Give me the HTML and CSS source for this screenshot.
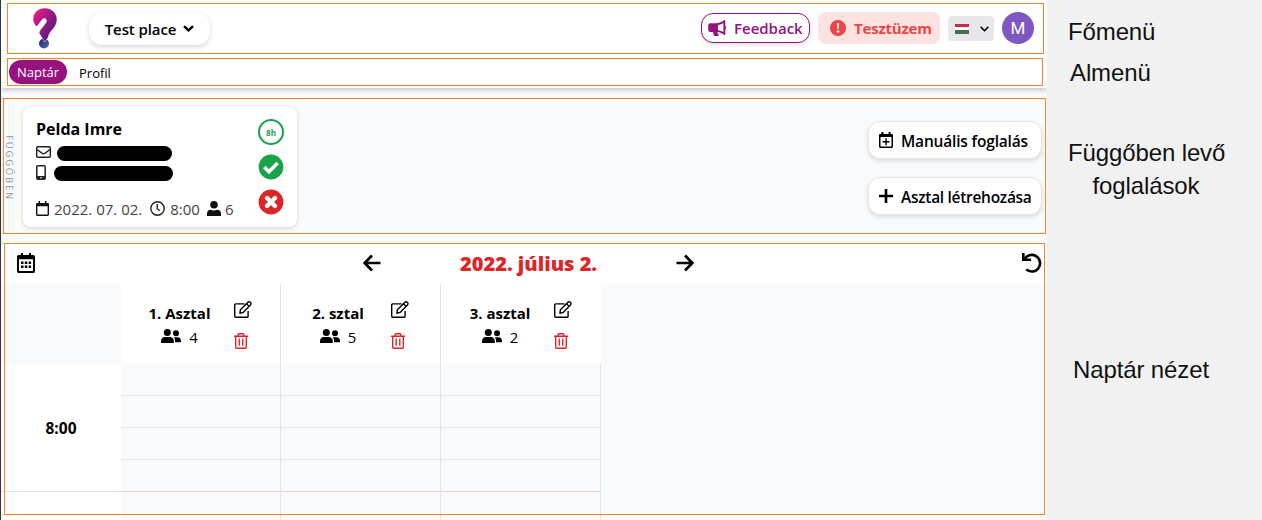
FILE: index.html
```html
<!DOCTYPE html>
<html lang="hu">
<head>
<meta charset="utf-8">
<title>Naptár</title>
<link rel="stylesheet" href="styles.css">
</head>
<body>
<svg class="defs" width="0" height="0">
  <symbol id="people" viewBox="0 0 20 14"><circle cx="6.3" cy="3.6" r="3.5"/><path d="M0 13.9v-2.1C0 9.500 1.900 7.900 4 7.900h4.800c2.100 0 4 1.600 4 3.900v2.100z"/><circle cx="15" cy="4.200" r="3"/><path d="M13.400 8.200h3.300c1.900 0 3.300 1.600 3.300 3.500v1.500h-6v-1.800c0-1.300-.5-2.300-1.300-3z"/></symbol>
  <symbol id="edit" viewBox="0 0 18 17"><g fill="none" stroke="currentColor" stroke-width="1.400" stroke-linejoin="round"><path d="M10.500 2.900H1.700a1 1 0 0 0-1 1v11.400a1 1 0 0 0 1 1h11.400a1 1 0 0 0 1-1V10"/><path d="M5.900 12.200l.5-3.400 7.500-7.500c.7-.7 1.600-.7 2.300 0l.3.300c.7.700.7 1.600 0 2.300L9.100 11.400z"/><path d="M12.500 2.800l2.500 2.500"/></g></symbol>
  <symbol id="trash" viewBox="0 0 14 16"><g fill="none" stroke="currentColor" stroke-width="1.400"><path d="M0 3.200h14M4.200 3V1.600c0-.5.300-.9.800-.9h4c.5 0 .8.400.8.900V3M1.700 3.200v11c0 .6.400 1.100 1 1.100h8.600c.6 0 1-.5 1-1.100v-11M5.200 5.500v7.300M8.800 5.500v7.300"/></g></symbol>
</svg>
<div class="page">
  <div class="app">
    <div class="topbar">
      <header class="main-menu">
        <svg class="logo" width="24" height="41" viewBox="0 0 24 41">
          <defs>
            <linearGradient id="lg" x1="0" y1="0" x2="1" y2="1"><stop offset="0" stop-color="#f2168b"/><stop offset=".18" stop-color="#d91886"/><stop offset=".58" stop-color="#801b7f"/><stop offset="1" stop-color="#281c76"/></linearGradient>
            <linearGradient id="ld" x1="0" y1="0" x2="1" y2="1"><stop offset="0" stop-color="#241c6c"/><stop offset="1" stop-color="#4f72ac"/></linearGradient>
          </defs>
          <circle cx="11" cy="35.500" r="5" fill="url(#ld)"/>
          <path fill="url(#lg)" stroke="#fff" stroke-width=".5" d="M11.800 0C18.800 0 24 5 24 11.300c0 4-1.800 7.300-4.500 10.300-2.500 2.900-4 5.200-4.500 8.200L11.600 34 6.500 25.800c-.7-1.400-.2-2.500.9-3.900l5.100-6.700c1.100-1.500 1.300-2.600.6-3.700-.9-1.400-3-1.200-4.200.4l-4.200 5.700c-.7 1-1.600 1-2.200 0C.900 15.500 0 13.700 0 11.300 0 4.900 4.900 0 11.800 0z"/>
        </svg>
        <button class="place">Test place <svg width="11" height="7" viewBox="0 0 11 7"><path d="M1 1.200l4.500 4.200L10 1.200" fill="none" stroke="#000" stroke-width="2.400"/></svg></button>
        <button class="feedback"><svg width="19" height="16" viewBox="0 0 19 16"><path d="M2.200 3.200H8C11 3.200 13.800 2 15.900.3c.6-.5 1.400-.2 1.400.6V6c1 .3 1 2.800 0 3.200v5c0 .8-.8 1.100-1.400.6-1.800-1.500-4-2.500-6.500-2.800.1 1.100.5 1.800 1.200 2.400.5.400.2 1.500-.5 1.500H7c-.6 0-1-.2-1.200-.7-.5-1.100-.7-2.100-.6-3.300h-3C1 11.900.2 11.100.2 9.900V5.200c0-1.200.8-2 2-2z"/><path fill="#fff" d="M10 4.900c2-.3 3.900-1 5.400-2v9.200c-1.500-1-3.400-1.600-5.400-1.900z"/></svg><span>Feedback</span></button>
        <div class="test-mode"><svg width="16" height="16" viewBox="0 0 16 16"><circle cx="8" cy="8" r="8" fill="#ef4444"/><path d="M6.800 3h2.400l-.3 6H7.100z" fill="#fde2e2"/><circle cx="8" cy="11.600" r="1.400" fill="#fde2e2"/></svg><span>Tesztüzem</span></div>
        <div class="language"><i class="flag"></i><svg width="9" height="6" viewBox="0 0 9 6"><path d="M.7.900l3.800 3.800L8.300.900" fill="none" stroke="#000" stroke-width="1.600"/></svg></div>
        <div class="avatar">M</div>
      </header>
      <nav class="sub-menu"><a class="active">Naptár</a><a>Profil</a></nav>
    </div>

    <section class="pending">
      <div class="side-label">FÜGGŐBEN</div>
      <article class="booking">
        <div class="booking-info">
          <h2>Pelda Imre</h2>
          <div class="contact"><svg width="15" height="12" viewBox="0 0 15 12"><g fill="none" stroke="#222" stroke-width="1.400"><rect x=".7" y=".7" width="13.600" height="10.600" rx="1"/><path d="M1 3.500l5.300 3.900c.8.500 1.600.5 2.400 0L14 3.500"/></g></svg><span class="redacted mail"></span></div>
          <div class="contact phone-row"><svg width="10" height="15" viewBox="0 0 10 15"><rect x=".8" y=".8" width="8.400" height="13.400" rx="1" fill="none" stroke="#222" stroke-width="1.500"/><path d="M1 11h8v3H1z" fill="#222"/><circle cx="5" cy="12.700" r=".8" fill="#fff"/></svg><span class="redacted phone"></span></div>
          <div class="meta">
            <svg width="13" height="15" viewBox="0 0 13 15"><path d="M2.500 0h1.600v2h4.800V0h1.600v2h1.200c.8 0 1.300.5 1.300 1.300v10.300c0 .8-.5 1.400-1.300 1.400H1.300C.5 15 0 14.400 0 13.600V3.300C0 2.500.5 2 1.300 2h1.200zM1.400 5.200v8.400h10.200V5.200z"/></svg>
            <span class="date">2022. 07. 02.</span>
            <svg class="clock" width="15" height="15" viewBox="0 0 15 15"><g fill="none" stroke="#222" stroke-width="1.400"><circle cx="7.500" cy="7.500" r="6.700"/><path d="M7.200 3v4.700l2.600 2"/></g></svg>
            <span class="time">8:00</span>
            <svg class="person" width="14" height="15" viewBox="0 0 14 15"><circle cx="7" cy="3.800" r="3.800"/><path d="M0 15v-2.400c0-2.200 1.600-3.800 3.800-3.800.8.300 2 .6 3.200.6s2.400-.3 3.200-.6c2.200 0 3.800 1.600 3.800 3.800V15z"/></svg>
            <span>6</span>
          </div>
        </div>
        <div class="actions">
          <span class="hours">8h</span>
          <svg width="26" height="26" viewBox="0 0 26 26"><circle cx="13" cy="13" r="12.400" fill="#19a44b"/><path d="M6.300 13l4.700 4.700 8.600-8.600" fill="none" stroke="#fff" stroke-width="3.500"/></svg>
          <svg width="26" height="26" viewBox="0 0 26 26"><circle cx="13" cy="13" r="12.400" fill="#dc2626"/><path d="M9 9l8 8M17 9l-8 8" fill="none" stroke="#fff" stroke-width="4.400" stroke-linecap="round"/></svg>
        </div>
      </article>
      <div class="buttons">
        <button><svg width="14" height="16" viewBox="0 0 14 16"><path d="M2.400 0h2v2h5.200V0h2v2h1c.9 0 1.400.5 1.400 1.400v11.200c0 .9-.5 1.400-1.400 1.400H1.400C.5 16 0 15.500 0 14.600V3.400C0 2.500.5 2 1.400 2h1zM1.500 5v9.500h11V5zM6.300 6.300h1.400v2.800h2.800v1.400H7.700v2.800H6.300v-2.800H3.500V9.100h2.800z"/></svg><span class="manual">Manuális foglalás</span></button>
        <button><svg width="14" height="14" viewBox="0 0 14 14"><path d="M5.700 0h2.600v5.700H14v2.600H8.300V14H5.700V8.300H0V5.700h5.700z"/></svg><span class="create">Asztal létrehozása</span></button>
      </div>
    </section>

    <section class="calendar">
      <div class="toolbar">
        <svg class="cal-icon" width="18" height="20" viewBox="0 0 18 20"><path d="M4 0h2v2h6V0h2v2h2.200c1.100 0 1.800.7 1.800 1.800v14.400c0 1.100-.7 1.800-1.800 1.800H1.800C.7 20 0 19.300 0 18.200V3.800C0 2.700.7 2 1.800 2H4zM2 6.300V18h14V6.300z"/><path d="M4 8.500h2.500v2.500H4zM7.800 8.500h2.500v2.500H7.800zM11.600 8.500h2.500v2.500h-2.500zM4 12.500h2.500V15H4zM7.800 12.500h2.500V15H7.800zM11.600 12.500h2.500V15h-2.500z"/></svg>
        <svg class="prev" width="18" height="18" viewBox="0 0 18 18"><path d="M17.500 9H2M9 1.500L1.700 9 9 16.500" fill="none" stroke="#000" stroke-width="2.700"/></svg>
        <h1>2022. július 2.</h1>
        <svg class="next" width="18" height="18" viewBox="0 0 18 18"><path d="M.5 9H16M9 1.500L16.300 9 9 16.500" fill="none" stroke="#000" stroke-width="2.700"/></svg>
        <svg class="undo" width="20" height="20" viewBox="0 0 20 20"><path d="M2.300 6.600A8.300 8.300 0 1 1 4.200 16.400" fill="none" stroke="#000" stroke-width="2.600"/><path d="M0 0h2.600v4.200L4 5.500h5V8H0z"/></svg>
      </div>
      <div class="grid">
        <div class="corner"></div>
        <div class="table-head"><div class="table-info"><strong>1. Asztal</strong><span><svg width="20" height="14"><use href="#people"/></svg>4</span></div><div class="tools"><svg width="18" height="17"><use href="#edit"/></svg><svg class="trash" width="14" height="16"><use href="#trash"/></svg></div></div>
        <div class="table-head"><div class="table-info short"><strong>2. sztal</strong><span><svg width="20" height="14"><use href="#people"/></svg>5</span></div><div class="tools"><svg width="18" height="17"><use href="#edit"/></svg><svg class="trash" width="14" height="16"><use href="#trash"/></svg></div></div>
        <div class="table-head"><div class="table-info"><strong>3. asztal</strong><span><svg width="20" height="14"><use href="#people"/></svg>2</span></div><div class="tools"><svg width="18" height="17"><use href="#edit"/></svg><svg class="trash" width="14" height="16"><use href="#trash"/></svg></div></div>
        <div class="hour">8:00</div>
        <div class="slots"><i></i><i></i><i></i><i></i></div>
        <div class="slots"><i></i><i></i><i></i><i></i></div>
        <div class="slots"><i></i><i></i><i></i><i></i></div>
        <div class="hour"></div>
        <div class="slots"></div>
        <div class="slots"></div>
        <div class="slots"></div>
      </div>
      <div class="frame"></div>
    </section>
  </div>
  <aside class="notes">
    <p class="n-main">Főmenü</p>
    <p class="n-sub">Almenü</p>
    <p class="n-pending">Függőben levő<br>foglalások</p>
    <p class="n-calendar">Naptár nézet</p>
  </aside>
</div>
</body>
</html>
```

FILE: styles.css
```css
* { box-sizing: border-box; }
body { margin: 0; font-family: "Open Sans", "Noto Sans", sans-serif; font-size: 15px; color: #000; overflow: hidden; }
svg { display: block; flex: none; }
.defs { position: absolute; }
h1, h2, p { margin: 0; }
button { font: inherit; color: inherit; padding: 0; }
.page { display: flex; width: 1262px; height: 520px; background: #f1f1f1; }
.app { display: flex; flex-direction: column; width: 1047px; height: 520px; border-left: 1px solid #36333b; background: #f9fafc; overflow: hidden; }

.topbar { flex: none; height: 88px; padding: 3px 3px 0 6px; background: #fff; box-shadow: 0 2px 5px rgba(0, 0, 0, .22); }
.main-menu { display: flex; align-items: center; height: 51px; border: 1px solid #ff8127; padding: 0 9px 1px 25px; }
.logo { margin-right: 32px; }
.place { display: flex; align-items: center; justify-content: center; gap: 7px; width: 121px; height: 32px; margin: 1px auto 0 0; border: 0; border-radius: 13px; background: #fff; box-shadow: 0 2px 5px rgba(0, 0, 0, .16); font-weight: 600; letter-spacing: -.1px; white-space: nowrap; }
.feedback { display: flex; align-items: center; gap: 7px; width: 109px; height: 30px; padding-left: 6px; border: 1px solid #96127f; border-radius: 12px; background: #fff; color: #96127f; fill: #96127f; font-weight: 600; box-shadow: 0 2px 4px rgba(0, 0, 0, .12); }
.test-mode { display: flex; align-items: center; gap: 8px; width: 122px; height: 32px; margin-left: 8px; padding-left: 12px; border-radius: 8px; background: #fde2e2; color: #ef4444; font-weight: 700; letter-spacing: -.2px; }
.language { display: flex; align-items: center; gap: 11px; width: 46px; height: 25px; margin: 1px 0 0 8px; padding-left: 7px; border-radius: 4px; background: #e8e8eb; }
.flag { width: 14px; height: 10px; background: linear-gradient(#cd2a3e 3px, #fff 3px 6px, #436f4d 6px); }
.avatar { width: 32px; height: 32px; margin-left: 8px; border-radius: 50%; background: #7e57c2; color: #fff; font: 400 17px/32px Roboto, sans-serif; text-align: center; }
.sub-menu { display: flex; align-items: center; height: 28px; margin: 4px 1px 0 0; padding-left: 1px; border: 1px solid #ff8127; font-size: 13px; }
.sub-menu a { padding: 1px 12px 0; }
.sub-menu .active { width: 58px; height: 24px; padding: 0; line-height: 25px; text-align: center; border-radius: 12px; background: #96127f; color: #fff; }

.pending { display: flex; flex: none; height: 136px; margin: 10px 1px 0 2px; border: 1px solid #ff8127; }
.side-label { width: 12px; margin: 36px 7px 0 -1px; writing-mode: vertical-rl; font-size: 9.500px; line-height: 12px; letter-spacing: 1.800px; color: #8d94a0; white-space: nowrap; }
.booking { display: flex; justify-content: space-between; width: 274px; height: 120px; margin: 8px auto 0 1px; padding: 11px 13px 0 13px; border-radius: 8px; background: #fff; box-shadow: 0 1px 4px rgba(0, 0, 0, .16); }
.booking h2 { font-size: 16px; line-height: 23px; margin-bottom: 1px; font-weight: 700; }
.contact { display: flex; align-items: center; height: 20px; }
.redacted { height: 15px; border-radius: 7.500px; background: #000; }
.mail { width: 115px; margin: 3px 0 0 6px; }
.phone { width: 119px; margin-left: 8px; margin-top: 2px; }
.phone-row { padding-top: 1px; }
.meta { display: flex; align-items: center; margin-top: 17px; font-size: 15px; line-height: 20px; color: #444; white-space: nowrap; }
.meta svg { margin: -1px 5px 0 0; fill: #111; }
.meta .clock { margin-left: 8px; }
.meta .person { margin-left: 7px; margin-right: 4px; }
.actions { display: flex; flex-direction: column; gap: 9px; padding-top: 1px; }
.hours { width: 26px; height: 26px; border: 2px solid #19a44b; border-radius: 50%; font-size: 8px; line-height: 24px; font-weight: 700; text-align: center; color: #19a44b; }
.buttons { display: flex; flex-direction: column; gap: 18px; padding: 22px 3px 0 0; }
.buttons button { display: flex; align-items: center; gap: 8px; width: 174px; height: 38px; padding-left: 10px; border: 1px solid #e3e5e8; border-radius: 12px; background: #fff; box-shadow: 0 2px 4px rgba(0, 0, 0, .13); font-size: 15.500px; font-weight: 600; white-space: nowrap; }
.buttons span { padding-top: 1px; }
.manual { letter-spacing: -.18px; }
.create { letter-spacing: -.3px; }

.calendar { position: relative; flex: none; height: 280px; margin-top: 7px; }
.frame { position: absolute; left: 3px; top: 2px; width: 1041px; height: 272px; border: 1px solid #ff8127; }
.toolbar { display: flex; align-items: center; height: 43px; padding: 1px 5px 0 16px; background: #fff; }
.prev { margin-left: 328px; }
.toolbar h1 { width: 137px; margin: 1px 0 0 79px; font-size: 20px; line-height: 26px; font-weight: 800; color: #dc2626; white-space: nowrap; }
.next { margin-left: 79px; }
.undo { margin-left: auto; }
.grid { display: grid; grid-template-columns: 120px 160px 160px 160px; grid-template-rows: 80px 128px 29px; width: 600px; }
.table-head { display: flex; justify-content: center; gap: 22px; padding: 17px 2px 0 0; background: #fff; border-right: 1px solid #e3e4e7; }
.table-head:nth-child(3) { padding-right: 0; }
.table-head:nth-child(4) { border-right: 0; }
.table-info { width: 64px; text-align: center; white-space: nowrap; line-height: 24px; }
.table-info.short { width: 57px; padding-right: 5px; }
.table-info strong { display: block; }
.table-info span { display: flex; justify-content: center; gap: 8px; }
.table-info svg { margin-top: 4px; }
.tools svg + svg { margin-top: 15px; }
.trash { color: #dc2626; }
.hour { display: flex; align-items: center; justify-content: center; background: #fff; border-bottom: 1px solid #e3e4e7; font-weight: 700; font-size: 15.500px; }
.slots { border-right: 1px solid #e3e4e7; }
.slots i { display: block; height: 32px; border-bottom: 1px solid #e3e4e7; }
.slots i:last-child { border-bottom-color: #f5cdd2; }

.notes { flex: 1; font: 24px/33px "Liberation Sans", sans-serif; letter-spacing: -.12px; white-space: nowrap; color: #111; }
.n-main { margin: 15px 0 0 21px; }
.n-sub { margin: 8px 0 0 23px; }
.n-pending { width: 156px; margin: 47px 0 0 21px; text-align: center; }
.n-calendar { margin: 151px 0 0 26px; }
```
